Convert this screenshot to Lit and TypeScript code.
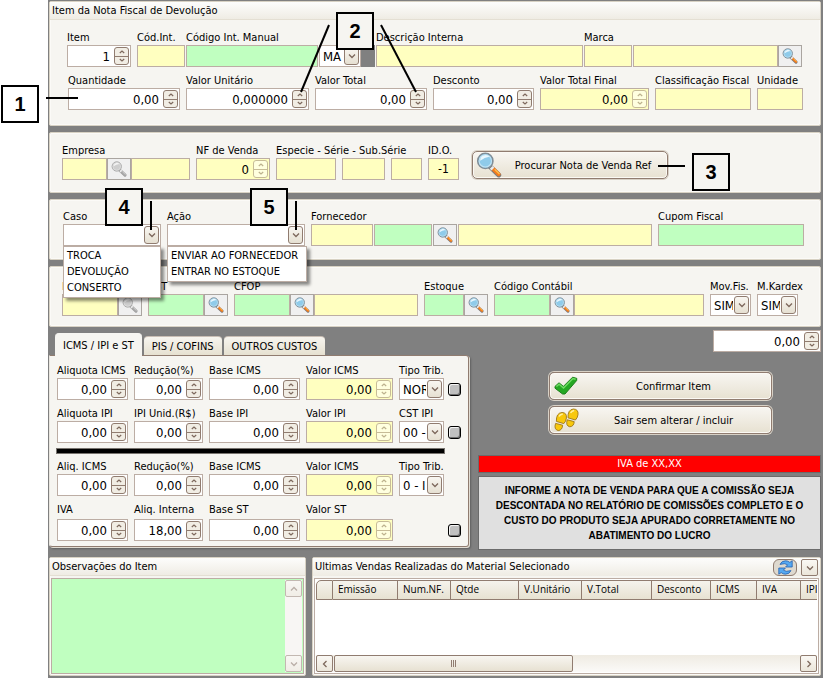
import { LitElement, html, css, svg, nothing } from "lit";
import type { TemplateResult } from "lit";
import { customElement } from "lit/decorators.js";
import { styleMap } from "lit/directives/style-map.js";

type Tone = "white" | "yellow" | "green";

/** A width in pixels, or null for a box that takes the remaining space. */
type Width = number | null;

const size = (w: Width) =>
  styleMap(w === null ? { flex: "1 1 0" } : { flex: `0 0 ${w}px` });

const magnifier = (muted: boolean, px: number) => html`<svg
  class=${muted ? "muted" : ""}
  width=${px}
  height=${px}
  viewBox="0 0 24 24"
  aria-hidden="true"
>
  <path d="M12.6 13.2 L21 21.2" stroke="#7d7c7c" stroke-width="4.6" stroke-linecap="round" />
  <path d="M15.6 15.4 L21 20.6" stroke="#f47a1c" stroke-width="3.4" stroke-linecap="round" />
  <path d="M17.6 16.4 L21.4 20" stroke="#ffc04a" stroke-width="1.2" stroke-linecap="round" />
  <path d="M14 14.2 L15.6 15.8" stroke="#e8ecee" stroke-width="3.6" />
  <circle cx="8.6" cy="8.2" r="7" fill="#8fcbea" stroke="#808d96" stroke-width="1.5" />
  <circle cx="8.6" cy="8.2" r="5.7" fill="none" stroke="#bfe2f3" stroke-width="1" />
  <path d="M3.8 8 A5 5 0 0 1 12.4 4.4 Q8 5 3.8 8Z" fill="#e9f7fe" />
</svg>`;

const chevron = (d: string) => html`<svg width="10" height="10" viewBox="0 0 10 10" aria-hidden="true">
  <path d=${d} fill="none" stroke="currentColor" stroke-width="1.3" />
</svg>`;
const DOWN = "M2 3.5 L5 6.5 L8 3.5";
const UP = "M2 6.5 L5 3.5 L8 6.5";
const LEFT = "M6.5 2 L3.5 5 L6.5 8";
const RIGHT = "M3.5 2 L6.5 5 L3.5 8";

const box = (id: string, w: Width, tone: Tone, value = "") => html`<input
  class="box ${tone}"
  id=${id}
  aria-label=${id}
  style=${size(w)}
  .value=${value}
/>`;

const spin = (id: string, w: Width, value = "0,00", tone: Tone = "white") => html`<span
  class="spin ${tone}"
  style=${size(w)}
>
  <input id=${id} .value=${value} aria-label=${id} />
  <span class="steps">
    <button aria-label="+">
      <svg width="6" height="4" viewBox="0 0 6 4"><path d="M0.8 3 L3 1 L5.2 3" fill="none" stroke="currentColor" stroke-width="1.2" /></svg>
    </button>
    <button aria-label="-">
      <svg width="6" height="4" viewBox="0 0 6 4"><path d="M0.8 1 L3 3 L5.2 1" fill="none" stroke="currentColor" stroke-width="1.2" /></svg>
    </button>
  </span>
</span>`;

const combo = (id: string, w: Width, value = "") => html`<span class="combo" style=${size(w)}>
  <select id=${id} aria-label=${id}>
    <option>${value}</option>
  </select>
  <span class="drop">${chevron(DOWN)}</span>
</span>`;

const lookup = (muted = false) => html`<button class="lookup" aria-label="Procurar">
  ${magnifier(muted, 16)}
</button>`;

const field = (
  label: string,
  id: string,
  controls: TemplateResult | TemplateResult[],
  grow = false,
  kind = ""
) => html`<div class="field ${grow ? "grow" : ""} ${kind}">
  <label for=${id}>${label}</label>
  <div class="controls">${controls}</div>
</div>`;

const COLUMNS: [string, number][] = [
  ["", 17],
  ["Emissão", 65],
  ["Num.NF.", 53],
  ["Qtde", 68],
  ["V.Unitário", 63],
  ["V.Total", 70],
  ["Desconto", 59],
  ["ICMS", 46],
  ["IVA", 44],
  ["IPI", 40],
];

@customElement("app-root")
export class AppRoot extends LitElement {
  static styles = css`
    :host {
      display: block;
      position: relative;
      min-height: 100vh;
      background: #fff;
      color: #000;
      font: 11px/15px "DejaVu Sans Condensed", "DejaVu Sans", sans-serif;
      --panel: #f6f5f1;
      --edge: #d8d2c4;
      --line: #bcada4;
      --dark: #907c70;
    }
    * {
      box-sizing: border-box;
    }
    input,
    select,
    button,
    textarea {
      font: inherit;
      color: inherit;
      margin: 0;
      padding: 0;
      border: 0;
      border-radius: 0;
      background: none;
      min-width: 0;
      outline: none;
    }
    svg {
      display: block;
      flex: none;
    }
    .muted {
      filter: grayscale(1);
      opacity: 0.7;
    }
    .form {
      margin-left: 48px;
      min-height: 100vh;
      padding: 1px 2px 2px 1px;
      background: #808080;
      display: flex;
      flex-direction: column;
    }
    .panel {
      background: var(--panel);
      border: 1px solid var(--edge);
      border-radius: 2px;
      box-shadow: inset 0 0 0 1px #fbfaf7;
      margin-bottom: 6px;
    }
    .title {
      margin: 0;
      height: 18px;
      padding: 1px 2px;
      font: inherit;
      background: linear-gradient(#fdfdfc, #efece4);
      border-bottom: 1px solid #e4dfd3;
    }
    .row {
      display: flex;
      gap: 6px;
    }
    .item .row {
      padding: 10px 18px 0 17px;
    }
    .item .row + .row {
      padding: 6px 17px 0 18px;
    }
    .item {
      padding-bottom: 15px;
    }
    .sale .row {
      padding: 10px 18px 12px 12px;
    }
    .case .row {
      padding: 9px 16px 13px 13px;
    }
    .codes .row {
      padding: 12px 22px 10px 12px;
    }
    .field {
      display: flex;
      flex-direction: column;
      flex: none;
      min-width: 0;
    }
    .field.grow {
      flex: 1 1 0;
    }
    .field.close {
      margin-right: -5px;
    }
    .field label {
      height: 15px;
      white-space: nowrap;
      width: 0;
      overflow: visible;
    }
    .controls {
      display: flex;
      height: 22px;
    }
    .gap1 {
      flex: none;
      width: 1px;
    }
    .gap6 {
      flex: none;
      width: 6px;
    }
    .swatch {
      flex: none;
      width: 14px;
      background: #808080;
    }
    .box,
    .spin,
    .combo {
      height: 22px;
      border: 1px solid var(--line);
      min-width: 0;
      font-size: 13px;
    }
    .box {
      font-size: 12px;
      text-align: center;
    }
    .white {
      background: #fff;
    }
    .yellow {
      background: #ffffc0;
    }
    .green {
      background: #c0ffc0;
    }
    .spin {
      display: flex;
      align-items: center;
      padding: 1px;
    }
    .spin input {
      flex: 1 1 0;
      width: 0;
      height: 18px;
      text-align: right;
      padding-right: 4px;
    }
    .steps {
      flex: none;
      width: 15px;
      height: 18px;
      border: 1px solid var(--dark);
      border-radius: 3px;
      display: flex;
      flex-direction: column;
      color: #7d685c;
      background: #f1ede4;
    }
    .steps button {
      flex: 1;
      display: grid;
      place-items: center;
    }
    .steps button + button {
      border-top: 1px solid var(--dark);
    }
    .yellow .steps {
      opacity: 0.5;
      background: #fff;
    }
    .combo {
      display: flex;
      gap: 1px;
      background: #fff;
      padding: 1px;
    }
    .combo select {
      appearance: none;
      flex: 1 1 0;
      width: 0;
      height: 18px;
      padding-left: 2px;
      overflow: hidden;
      text-overflow: clip;
    }
    .drop {
      flex: none;
      width: 15px;
      height: 18px;
      display: grid;
      place-items: center;
      border: 1px solid var(--dark);
      border-radius: 3px;
      background: linear-gradient(#f8f6f1, #e6e0d2);
      color: #7d685c;
      pointer-events: none;
    }
    .lookup {
      flex: none;
      width: 24px;
      height: 22px;
      display: grid;
      place-items: center;
      border: 1px solid #aaa5a0;
      background: #f0f0f0;
    }
    .push {
      display: flex;
      align-items: center;
      height: 28px;
      padding: 0 3px;
      border: 1px solid var(--dark);
      border-radius: 5px;
      background: linear-gradient(#f8f6f2, #e7e1d1);
      box-shadow: inset 0 0 0 1px #fbf9f4, 0 0 0 1px #d8d1c6;
    }
    .push span {
      flex: 1;
      text-align: center;
    }
    .search {
      width: 196px;
      margin: 8px 0 0 7px;
    }
    .menu {
      position: absolute;
      top: 246px;
      margin: 0;
      padding: 1px 2px 1px 3px;
      list-style: none;
      background: #fff;
      border: 1px solid var(--line);
      box-shadow: 3px 3px 3px rgba(0, 0, 0, 0.45);
      line-height: 16px;
      white-space: nowrap;
    }
    .menu.cases {
      left: 63px;
      width: 98px;
    }
    .menu.actions {
      left: 167px;
      width: 140px;
    }
    .middle {
      display: flex;
      gap: 9px;
      margin-top: -6px;
    }
    .taxes {
      flex: none;
      width: 420px;
      padding-top: 6px;
    }
    .tabs {
      display: flex;
      align-items: flex-end;
      gap: 2px;
      padding-left: 6px;
      height: 22px;
    }
    .tabs button {
      height: 19px;
      padding: 0 8px;
      border-radius: 4px 4px 0 0;
      border-top: 1px solid #c9beb4;
      background: linear-gradient(#f7f5ef, #e6e1d1);
      white-space: nowrap;
    }
    .tabs .active {
      height: 23px;
      margin-bottom: -1px;
      background: var(--panel);
      border-color: var(--panel);
    }
    .sheet {
      background: var(--panel);
      border: 1px solid var(--dark);
      border-left-color: #e9e6df;
      border-radius: 0 3px 3px 3px;
      box-shadow: 1px 1px 0 #e2ddd3, 2px 2px 2px #5f5f5f;
      padding: 7px 0 5px 7px;
    }
    .sheet .row {
      align-items: flex-end;
      margin-bottom: 6px;
    }
    .sheet .row:last-child {
      margin: 0;
    }
    .sheet .row:last-child .field {
      gap: 2px;
    }
    .sheet .row .tick {
      margin-left: -2px;
    }
    .sheet .blank {
      width: 45px;
    }
    .rule {
      border: 0;
      margin: 0 24px 6px 0;
      height: 4px;
      background: #000;
      box-shadow: 0 0 0 1px #77736e;
    }
    .tick {
      appearance: none;
      width: 13px;
      height: 13px;
      margin-bottom: 4px;
      border: 1px solid #000;
      border-radius: 3px;
      background: #c0c0c0;
      box-shadow: inset 1px 1px 0 #f4f4f4, inset -1px -1px 0 #6f6f6f;
    }
    .side {
      flex: 1;
      min-width: 0;
      padding-top: 3px;
      display: flex;
      flex-direction: column;
    }
    .total {
      display: flex;
      justify-content: flex-end;
    }
    .actions-list {
      align-self: center;
      width: 223px;
      margin: 20px 0 21px 22px;
      display: flex;
      flex-direction: column;
      gap: 6px;
    }
    .iva {
      margin: 0 0 3px;
      height: 18px;
      line-height: 16px;
      text-align: center;
      color: #fff;
      background: #f00;
      border: 1px solid #6b6b6b;
    }
    .notice {
      margin: 0;
      padding: 6px 12px;
      background: #e0e0e0;
      border: 1px solid #6b6b6b;
      text-align: center;
      font: bold 10px/15px "Liberation Sans", Arial, sans-serif;
    }
    .bottom {
      flex: 1;
      display: flex;
      gap: 6px;
      margin-top: 7px;
    }
    .bottom .panel {
      margin: 0;
      display: flex;
      flex-direction: column;
      min-width: 0;
    }
    .notes {
      flex: none;
      width: 257px;
    }
    .sales {
      flex: 1 1 0;
    }
    .memo {
      flex: 1;
      display: flex;
      margin: 2px 1px 1px;
      border: 1px solid var(--line);
      background: #c0ffc0;
    }
    .memo textarea {
      flex: 1;
      height: 90px;
      resize: none;
    }
    .vbar {
      width: 17px;
      display: flex;
      flex-direction: column;
      justify-content: space-between;
      margin: 1px;
      background: #f8f6f4;
    }
    .arrow {
      flex: none;
      width: 17px;
      height: 17px;
      display: grid;
      place-items: center;
      border: 1px solid var(--dark);
      border-radius: 2px;
      background: linear-gradient(#faf8f4, #ebe6da);
      color: #7d685c;
    }
    .vbar .arrow {
      opacity: 0.5;
    }
    .caption {
      display: flex;
      align-items: center;
      justify-content: space-between;
      height: 18px;
      background: linear-gradient(#fdfdfc, #efece4);
    }
    .caption .title {
      background: none;
      border: 0;
    }
    .tools {
      display: flex;
      align-items: center;
      gap: 4px;
      padding: 1px 2px 0 0;
    }
    .refresh {
      width: 24px;
      height: 17px;
      display: grid;
      place-items: center;
      border: 1px solid var(--dark);
      border-radius: 6px;
      background: #ded9cf;
    }
    .grid {
      flex: 1;
      display: flex;
      flex-direction: column;
      justify-content: space-between;
      margin: 2px 1px 1px;
      padding: 1px;
      border: 1px solid var(--line);
      background: #fff;
      overflow: hidden;
    }
    .clip {
      overflow: hidden;
    }
    table {
      border-collapse: separate;
      border-spacing: 0;
      table-layout: fixed;
      width: 525px;
    }
    th {
      height: 20px;
      padding: 0 0 1px 5px;
      text-align: left;
      font: 500 10px/15px "Open Sans", sans-serif;
      white-space: nowrap;
      background: linear-gradient(#f5f3ed, #e7e2d2);
      border: solid var(--dark);
      border-width: 1px 1px 1px 0;
    }
    th:first-child {
      border-left-width: 1px;
      border-top-left-radius: 5px;
    }
    .hbar {
      display: flex;
      background: linear-gradient(#efebe2, #fbfaf8);
    }
    .thumb {
      flex: 0 0 239px;
      margin: 0 auto 0 1px;
      height: 17px;
      border: 1px solid var(--dark);
      border-radius: 2px;
      background: linear-gradient(#f8f6f1, #e7e1d2);
      display: flex;
      justify-content: center;
      align-items: center;
      gap: 1px;
    }
    .thumb i {
      width: 1px;
      height: 7px;
      background: #907c70;
    }
    .pointers {
      position: absolute;
      left: 0;
      top: 0;
      pointer-events: none;
    }
    .callout {
      position: absolute;
      width: 38px;
      height: 38px;
      border: 2px solid #000;
      background: var(--panel);
      text-align: center;
      font: bold 20px/34px "Liberation Sans", Arial, sans-serif;
    }
    .callout.margin {
      background: #fff;
    }
  `;

  private taxRow(
    p: string,
    labels: string[],
    values: string[],
    tipo?: string,
    tick = true
  ) {
    return html`<div class="row">
      ${[71, 69, 91, 87].map((w, i) =>
        field(labels[i], `${p}${i}`, spin(`${p}${i}`, w, values[i], i === 3 ? "yellow" : "white"))
      )}
      ${tipo ? field(labels[4], `${p}4`, combo(`${p}4`, 45, tipo)) : html`<span class="blank"></span>`}
      ${tick ? html`<input class="tick" type="checkbox" aria-label="Manual" />` : nothing}
    </div>`;
  }

  render() {
    const gap1 = html`<span class="gap1"></span>`;
    const gap6 = html`<span class="gap6"></span>`;
    const zero = ["0,00", "0,00", "0,00", "0,00"];
    const lines = [
      [46, 98, 78, 98],
      [329, 25, 301, 92],
      [381, 25, 416, 92],
      [658, 166, 685, 166],
      [151, 201, 151, 230],
      [296, 201, 296, 230],
    ];
    const callouts = [
      [1, 85],
      [336, 12],
      [692, 153],
      [105, 188],
      [250, 188],
    ];
    return html`
      <main class="form">
        <section class="panel item">
          <h1 class="title">Item da Nota Fiscal de Devolução</h1>
          <div class="row">
            ${field("Item", "item", spin("item", 64, "1"))}
            ${field("Cód.Int.", "cod", box("cod", 48, "yellow"), false, "close")}
            ${field("Código Int. Manual", "manual", [
              box("manual", 132, "green"),
              gap1,
              combo("origem", 42, "MA"),
              html`<span class="swatch"></span>`,
            ], false, "close")}
            ${field("Descrição Interna", "descr", box("descr", null, "yellow"), true, "close")}
            ${field("Marca", "marca", [
              box("marca", 48, "yellow"),
              gap1,
              box("marcaNome", 145, "yellow"),
              lookup(),
            ])}
          </div>
          <div class="row">
            ${field("Quantidade", "qtd", spin("qtd", 112))}
            ${field("Valor Unitário", "vu", spin("vu", 123, "0,000000"))}
            ${field("Valor Total", "vt", spin("vt", 112))}
            ${field("Desconto", "desc", spin("desc", 101))}
            ${field("Valor Total Final", "vtf", spin("vtf", 109, "0,00", "yellow"))}
            ${field("Classificação Fiscal", "clf", box("clf", null, "yellow"), true)}
            ${field("Unidade", "un", box("un", 46, "yellow"))}
          </div>
        </section>

        <section class="panel sale">
          <div class="row">
            ${field("Empresa", "emp", [box("emp", 45, "yellow"), lookup(true), box("empNome", 59, "yellow")])}
            ${field("NF de Venda", "nf", spin("nf", 74, "0", "yellow"))}
            ${field("Especie - Série - Sub.Série", "esp", [
              box("esp", 60, "yellow"),
              gap6,
              box("serie", 43, "yellow"),
              gap6,
              box("sub", 31, "yellow"),
            ])}
            ${field("ID.O.", "ido", box("ido", 31, "yellow", "-1"))}
            <button class="push search">${magnifier(false, 26)}<span>Procurar Nota de Venda Ref</span></button>
          </div>
        </section>

        <section class="panel case">
          <div class="row">
            ${field("Caso", "caso", combo("caso", 98))}
            ${field("Ação", "acao", combo("acao", 138))}
            ${field("Fornecedor", "forn", [
              box("forn", 62, "yellow"),
              gap1,
              box("fornCod", 58, "green"),
              gap1,
              lookup(),
              gap1,
              box("fornNome", null, "yellow"),
            ], true)}
            ${field("Cupom Fiscal", "cupom", box("cupom", 146, "green"))}
          </div>
        </section>

        <section class="panel codes">
          <div class="row">
            ${field("F", "fis", [box("fis", 56, "yellow"), lookup(true)])}
            ${field("CST", "cst", [box("cst", 56, "green"), lookup()])}
            ${field("CFOP", "cfop", [box("cfop", 56, "green"), lookup(), box("cfopNome", 104, "yellow")])}
            ${field("Estoque", "est", [box("est", 40, "green"), lookup()])}
            ${field("Código Contábil", "cc", [
              box("cc", 56, "green"),
              lookup(),
              box("ccNome", null, "yellow"),
            ], true)}
            ${field("Mov.Fis.", "mov", combo("mov", 41, "SIM"))}
            ${field("M.Kardex", "kar", combo("kar", 41, "SIM"))}
          </div>
        </section>

        <div class="middle">
          <section class="taxes">
            <div class="tabs" role="tablist">
              <button class="active" role="tab" aria-selected="true">ICMS / IPI e ST</button>
              <button role="tab">PIS / COFINS</button>
              <button role="tab">OUTROS CUSTOS</button>
            </div>
            <div class="sheet">
              ${this.taxRow("icms", ["Aliquota ICMS", "Redução(%)", "Base ICMS", "Valor ICMS", "Tipo Trib."], zero, "NORMAL")}
              ${this.taxRow("ipi", ["Aliquota IPI", "IPI Unid.(R$)", "Base IPI", "Valor IPI", "CST IPI"], zero, "00 -")}
              <hr class="rule" />
              ${this.taxRow("st", ["Aliq. ICMS", "Redução(%)", "Base ICMS", "Valor ICMS", "Tipo Trib."], zero, "0 - I", false)}
              ${this.taxRow("iva", ["IVA", "Aliq. Interna", "Base ST", "Valor ST"], ["0,00", "18,00", "0,00", "0,00"])}
            </div>
          </section>
          <section class="side">
            <div class="total">${spin("total", 108)}</div>
            <div class="actions-list">
              <button class="push">
                <svg width="26" height="24" viewBox="0 0 26 24" aria-hidden="true">
                  <path d="M2 12.4 L6 8.8 L10.4 12.4 L19.6 3.2 L23.8 4.4 L23.6 6.6 L12 20 L9.6 20 L2 14.2 Z" fill="#25a823" stroke="#1b7f1a" stroke-width="1" stroke-linejoin="round" />
                  <path d="M3.4 12.6 L6.1 10.2 L10.5 14 L20 4.6 L22.6 5.2" fill="none" stroke="#6fdc63" stroke-width="1.4" />
                </svg>
                <span>Confirmar Item</span>
              </button>
              <button class="push">
                <svg width="26" height="24" viewBox="0 0 26 24" aria-hidden="true">
                  <g fill="#f8c80c" stroke="#9c7616" stroke-width="0.9">
                    <path d="M9 4.5 Q14 4.6 13.4 10 Q13 13.6 10.8 15.6 L3.4 13.4 Q3 5 9 4.5Z" />
                    <path d="M2.6 15.4 L9.6 17.2 Q9.4 22.2 5.2 22.6 Q0.6 21.4 2.6 15.4Z" />
                    <path d="M20.4 1 Q25.6 1.2 25 6.6 Q24.6 10 22.4 12 L15 9.8 Q14.6 1.6 20.4 1Z" />
                    <path d="M14.2 11.8 L21.2 13.6 Q21 18.4 16.8 18.8 Q12.4 17.8 14.2 11.8Z" />
                  </g>
                  <path d="M6 8.6 Q7 6.2 9.8 6 M17.6 5 Q18.6 2.8 21.2 2.5" fill="none" stroke="#fff0a0" stroke-width="1.4" />
                </svg>
                <span>Sair sem alterar / incluir</span>
              </button>
            </div>
            <p class="iva">IVA de XX,XX</p>
            <p class="notice">
              INFORME A NOTA DE VENDA PARA QUE A COMISSÃO SEJA DESCONTADA NO RELATÓRIO DE COMISSÕES COMPLETO E O
              CUSTO DO PRODUTO SEJA APURADO CORRETAMENTE NO ABATIMENTO DO LUCRO
            </p>
          </section>
        </div>

        <div class="bottom">
          <section class="panel notes">
            <h2 class="title">Observações do Item</h2>
            <div class="memo">
              <textarea aria-label="Observações do Item"></textarea>
              <div class="vbar">
                <button class="arrow" aria-label="Subir">${chevron(UP)}</button>
                <button class="arrow" aria-label="Descer">${chevron(DOWN)}</button>
              </div>
            </div>
          </section>
          <section class="panel sales">
            <div class="caption">
              <h2 class="title">Ultimas Vendas Realizadas do Material Selecionado</h2>
              <div class="tools">
                <button class="refresh" aria-label="Atualizar">
                  <svg width="17" height="15" viewBox="0 0 17 15" aria-hidden="true">
                    <g fill="#55a9f2" stroke="#2360b0" stroke-width="0.8" stroke-linejoin="round">
                      <path d="M3 4.4 Q4.6 0.8 8.6 0.8 Q11 0.8 12.8 2.4 L15.2 0.8 L15.2 7 L8.6 7 L10.6 4.8 Q8.4 2.8 3 4.4 Z" />
                      <path d="M14 10.6 Q12.4 14.2 8.4 14.2 Q6 14.2 4.2 12.6 L1.8 14.2 L1.8 8 L8.4 8 L6.4 10.2 Q8.6 12.2 14 10.6 Z" />
                    </g>
                  </svg>
                </button>
                <button class="arrow" aria-label="Opções">${chevron(DOWN)}</button>
              </div>
            </div>
            <div class="grid">
              <div class="clip">
                <table>
                  <colgroup>
                    ${COLUMNS.map(([, w]) => html`<col style=${styleMap({ width: `${w}px` })} />`)}
                  </colgroup>
                  <thead>
                    <tr>
                      ${COLUMNS.map(([name]) => html`<th scope="col">${name}</th>`)}
                    </tr>
                  </thead>
                </table>
              </div>
              <div class="hbar">
                <button class="arrow" aria-label="Esquerda">${chevron(LEFT)}</button>
                <span class="thumb"><i></i><i></i><i></i></span>
                <button class="arrow" aria-label="Direita">${chevron(RIGHT)}</button>
              </div>
            </div>
          </section>
        </div>
      </main>

      <ul class="menu cases">
        <li>TROCA</li>
        <li>DEVOLUÇÃO</li>
        <li>CONSERTO</li>
      </ul>
      <ul class="menu actions">
        <li>ENVIAR AO FORNECEDOR</li>
        <li>ENTRAR NO ESTOQUE</li>
      </ul>

      <svg class="pointers" width="740" height="240" aria-hidden="true">
        ${lines.map(
          ([x1, y1, x2, y2]) =>
            svg`<line x1=${x1} y1=${y1} x2=${x2} y2=${y2} stroke="#000" stroke-width="2" />`
        )}
      </svg>
      ${callouts.map(
        ([x, y], i) =>
          html`<span
            class="callout ${i === 0 ? "margin" : ""}"
            style=${styleMap({ left: `${x}px`, top: `${y}px` })}
            >${i + 1}</span
          >`
      )}
    `;
  }
}
